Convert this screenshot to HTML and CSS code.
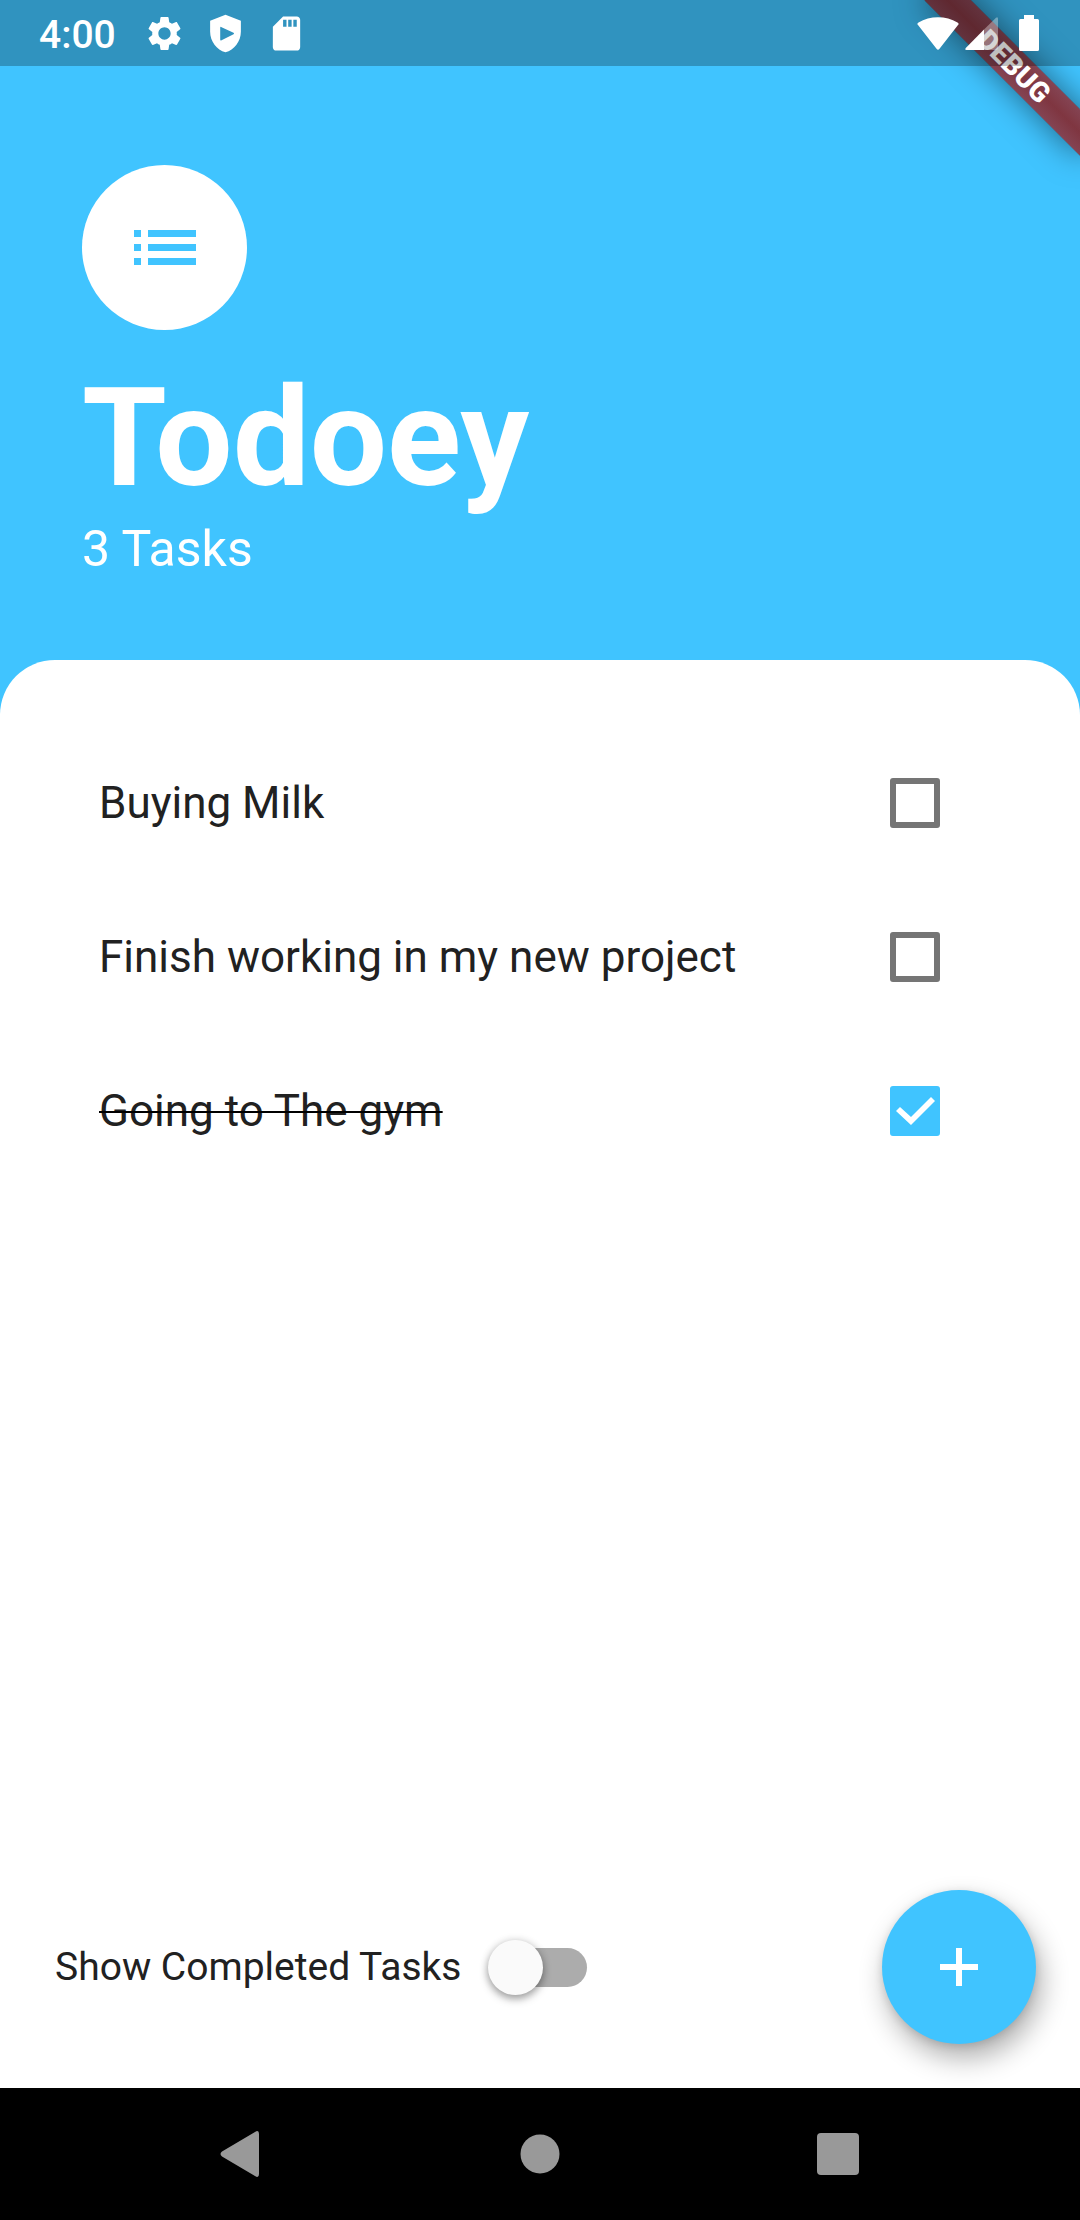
FILE: index.html
```html
<!DOCTYPE html>
<html lang="en">
<head>
<meta charset="utf-8">
<meta name="viewport" content="width=device-width">
<title>Todoey</title>
<link rel="stylesheet" href="styles.css">
</head>
<body>
<div class="app">
  <div class="status">
    <span class="status-time">4:00</span>
    <div class="status-icons">
      <svg class="icon" viewBox="0 0 24 24"><path d="M19.14 12.94c.04-.3.06-.61.06-.94 0-.32-.02-.64-.07-.94l2.03-1.58c.18-.14.23-.41.12-.61l-1.92-3.32c-.12-.22-.37-.29-.59-.22l-2.39.96c-.5-.38-1.03-.7-1.62-.94l-.36-2.54c-.04-.24-.24-.41-.48-.41h-3.84c-.24 0-.43.17-.47.41l-.36 2.54c-.59.24-1.13.57-1.62.94l-2.39-.96c-.22-.08-.47 0-.59.22L2.74 8.87c-.12.21-.08.47.12.61l2.03 1.58c-.05.3-.09.63-.09.94s.02.64.07.94l-2.03 1.58c-.18.14-.23.41-.12.61l1.92 3.32c.12.22.37.29.59.22l2.39-.96c.5.38 1.03.7 1.62.94l.36 2.54c.05.24.24.41.48.41h3.84c.24 0 .44-.17.47-.41l.36-2.54c.59-.24 1.13-.56 1.62-.94l2.39.96c.22.08.47 0 .59-.22l1.92-3.32c.12-.22.07-.47-.12-.61l-2.01-1.58zM12 15.6c-1.98 0-3.6-1.62-3.6-3.6s1.62-3.6 3.6-3.6 3.6 1.62 3.6 3.6-1.62 3.6-3.6 3.6z"/></svg>
      <svg class="icon" viewBox="0 0 24 24"><path fill-rule="evenodd" d="M12 1 3 4.600V11c0 5.550 3.840 10.740 9 12 5.160-1.260 9-6.450 9-12V4.600L12 1zM8.900 8.700q0-.9.8-.4l7 3.300q.7.400 0 .8l-7 3.500q-.8.400-.8-.4z"/></svg>
      <svg class="icon" viewBox="0 0 24 24"><path d="M18 2h-8L4.020 8 4 20c0 1.100.9 2 2 2h12c1.100 0 2-.9 2-2V4c0-1.100-.9-2-2-2zm-6 6h-2V4h2v4zm3 0h-2V4h2v4zm3 0h-2V4h2v4z"/></svg>
    </div>
    <div class="status-system">
      <svg width="42" height="33" viewBox="0 0 42 33"><path d="M1 8Q-.5 6.800 1.500 5.500C13-1.500 29-1.500 40.500 5.500Q42.500 6.800 41 8L22.500 31.800Q21 33.500 19.500 31.800Z"/></svg>
      <svg width="34" height="33" viewBox="0 0 34 33"><path opacity=".35" d="M19 12.500 31 .8Q33-.6 33 2V31Q33 33 31 33H19Z"/><path d="M19 12.500V33H1.500Q-.6 33 .8 31Z"/></svg>
      <svg class="battery" width="20" height="36" viewBox="0 0 20 36"><path d="M5 0H15V4H18.500Q20 4 20 5.500V34.500Q20 36 18.500 36H1.500Q0 36 0 34.500V5.500Q0 4 1.500 4H5Z"/></svg>
    </div>
  </div>
  <div class="banner">DEBUG</div>

  <header class="header">
    <div class="avatar">
      <svg width="62" height="35" viewBox="0 0 62 35"><path d="M0 0H7V7H0ZM14 0H62V7H14ZM0 14H7V21H0ZM14 14H62V21H14ZM0 28H7V35H0ZM14 28H62V35H14Z"/></svg>
    </div>
    <h1 class="title">Todoey</h1>
    <p class="count">3 Tasks</p>
  </header>

  <main class="card">
    <ul class="tasks">
      <li><label class="task"><span>Buying Milk</span><input class="check" type="checkbox"></label></li>
      <li><label class="task"><span>Finish working in my new project</span><input class="check" type="checkbox"></label></li>
      <li><label class="task"><span class="done">Going to The gym</span><input class="check" type="checkbox" checked></label></li>
    </ul>
    <div class="footer">
      <label class="toggle"><span>Show Completed Tasks</span><input class="switch" type="checkbox" role="switch"></label>
      <button class="fab" type="button" aria-label="Add task">
        <svg width="38" height="38" viewBox="0 0 38 38"><path d="M16 0H22V16H38V22H22V38H16V22H0V16H16Z"/></svg>
      </button>
    </div>
  </main>

  <nav class="nav">
    <button class="nav-button" type="button" aria-label="Back"><svg width="44" height="46" viewBox="0 0 44 46"><path d="M35 1Q39-1.500 39 3V43Q39 47.500 35 45L2 25.500Q-1 23 2 20.500Z"/></svg></button>
    <button class="nav-button" type="button" aria-label="Home"><svg width="40" height="40" viewBox="0 0 40 40"><circle cx="20" cy="20" r="19.500"/></svg></button>
    <button class="nav-button" type="button" aria-label="Recent apps"><svg width="42" height="42" viewBox="0 0 42 42"><rect width="42" height="42" rx="4"/></svg></button>
  </nav>
</div>
</body>
</html>
```
FILE: styles.css
```css
:root {
  --accent: #40c4ff;
  --text: #212121;
}

* {
  box-sizing: border-box;
}

body {
  margin: 0;
  font-family: Roboto, sans-serif;
  color: var(--text);
}

svg {
  display: block;
  flex: none;
}

button {
  border: 0;
  padding: 0;
  cursor: pointer;
}

.app {
  position: relative;
  display: flex;
  flex-direction: column;
  min-height: 100vh;
  overflow: hidden;
  background: var(--accent);
}

/* System status bar, drawn as a scrim above the banner */
.status {
  position: relative;
  z-index: 2;
  display: flex;
  align-items: center;
  height: 66px;
  padding: 0 41px 0 39px;
  background: rgba(0, 0, 0, 0.25);
  color: #fff;
  fill: #fff;
}

.status-time {
  padding-top: 3px;
  font-size: 39px;
  font-weight: 500;
}

.status-icons {
  display: flex;
  gap: 20px;
  margin-left: 28px;
}

.icon {
  width: 41px;
  height: 41px;
}

.status-system {
  display: flex;
  align-items: center;
  gap: 6px;
  margin-left: auto;
}

.battery {
  margin-left: 14px;
}

/* Corner ribbon; the black gradient carries the soft shadow under the red */
.banner {
  position: absolute;
  z-index: 1;
  top: 50px;
  right: -44px;
  width: 220px;
  height: 33px;
  background:
    linear-gradient(rgba(183, 28, 28, 0.63), rgba(183, 28, 28, 0.63)),
    linear-gradient(rgba(0, 0, 0, 0.3), rgba(0, 0, 0, 0.5) 50%, rgba(0, 0, 0, 0.3));
  box-shadow: 0 0 32px rgba(0, 0, 0, 0.5);
  color: #fff;
  font-size: 28px;
  font-weight: 900;
  line-height: 33px;
  text-align: center;
  transform: rotate(45deg);
}

.header {
  padding: 99px 82px 81px;
  color: #fff;
}

.avatar {
  display: grid;
  place-items: center;
  width: 165px;
  height: 165px;
  margin-bottom: 27px;
  border-radius: 50%;
  background: #fff;
  fill: var(--accent);
}

.title {
  margin: 0;
  font-size: 137px;
  font-weight: 700;
  line-height: 162px;
}

.count {
  margin: 0;
  font-size: 50px;
  line-height: 60px;
}

.card {
  flex: 1;
  display: flex;
  flex-direction: column;
  border-radius: 55px 55px 0 0;
  background: #fff;
}

.tasks {
  margin: 0;
  padding: 66px 140px 0 99px;
  list-style: none;
}

.task {
  display: flex;
  align-items: center;
  justify-content: space-between;
  min-height: 154px;
  font-size: 44px;
}

.done {
  text-decoration: line-through 2px #000;
}

.check {
  appearance: none;
  flex: none;
  width: 50px;
  height: 50px;
  margin: 0;
  border: 6px solid #757575;
  border-radius: 3px;
}

.check:checked {
  display: grid;
  place-items: center;
  border-color: var(--accent);
  background: var(--accent);
}

.check:checked::before {
  content: "";
  width: 39px;
  height: 28px;
  background: #fff;
  clip-path: polygon(0 14px, 4px 10px, 15px 20px, 35px 0, 39px 4px, 15px 28px);
}

.footer {
  display: flex;
  align-items: center;
  justify-content: space-between;
  margin-top: auto;
  padding: 44px 44px 44px 55px;
}

.toggle {
  display: flex;
  align-items: center;
  gap: 35px;
  font-size: 39px;
}

.switch {
  appearance: none;
  position: relative;
  width: 91px;
  height: 39px;
  margin: 0;
  border-radius: 20px;
  background: #acacac;
}

.switch::before {
  content: "";
  position: absolute;
  top: -8px;
  left: -8px;
  width: 55px;
  height: 55px;
  border-radius: 50%;
  background: #fafafa;
  box-shadow: 0 4px 8px rgba(0, 0, 0, 0.35), 0 0 8px rgba(0, 0, 0, 0.12);
}

.switch:checked::before {
  left: 44px;
  background: var(--accent);
}

.fab {
  display: grid;
  place-items: center;
  width: 154px;
  height: 154px;
  border-radius: 50%;
  background: var(--accent);
  box-shadow: 5px 14px 28px rgba(0, 0, 0, 0.32), 0 2px 8px rgba(0, 0, 0, 0.12);
  fill: #fff;
}

.nav {
  display: flex;
  align-items: center;
  justify-content: center;
  gap: 198px;
  height: 132px;
  background: #000;
}

.nav-button {
  display: grid;
  place-items: center;
  width: 100px;
  height: 100px;
  background: none;
  fill: #999;
}
```
